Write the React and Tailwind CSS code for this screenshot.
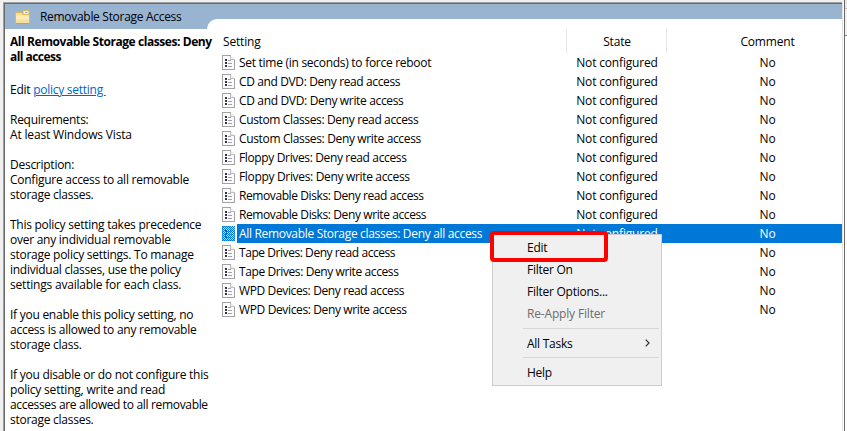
const ROWS = [
  ['Set time (in seconds) to force reboot', 'tracking-[-0.28px]'],
  ['CD and DVD: Deny read access', 'tracking-[-0.38px]'],
  ['CD and DVD: Deny write access', 'tracking-[-0.34px]'],
  ['Custom Classes: Deny read access', 'tracking-[-0.36px]'],
  ['Custom Classes: Deny write access', 'tracking-[-0.35px]'],
  ['Floppy Drives: Deny read access', 'tracking-[-0.36px]'],
  ['Floppy Drives: Deny write access', 'tracking-[-0.33px]'],
  ['Removable Disks: Deny read access', 'tracking-[-0.41px]'],
  ['Removable Disks: Deny write access', 'tracking-[-0.4px]'],
  ['All Removable Storage classes: Deny all access', 'tracking-[-0.32px]'],
  ['Tape Drives: Deny read access', 'tracking-[-0.44px]'],
  ['Tape Drives: Deny write access', 'tracking-[-0.4px]'],
  ['WPD Devices: Deny read access', 'tracking-[-0.38px]'],
  ['WPD Devices: Deny write access', 'tracking-[-0.37px]'],
];

function FolderIcon() {
  return (
    <svg width="16" height="16" viewBox="0 0 16 16" className="shrink-0">
      <path d="M8 1.500h5.500l.5 1V6H8z" fill="#fdf3cf" stroke="#dcb65c" />
      <path d="M.5 3.500h6l1.500 2h6.500v9H.5z" fill="#f8df98" stroke="#dcb65c" />
      <path d="M1 6.500h13v4H1z" fill="#fdebb5" />
      <path d="M10 3.500h2.500" stroke="#8aa9c8" />
      <path d="M1 14.500h13.500" stroke="#cfa146" />
    </svg>
  );
}

function PolicyIcon({ selected }) {
  return (
    <svg width="13" height="15" viewBox="0 0 13 15" className="shrink-0" shapeRendering="crispEdges">
      <path d="M.5.5h8l4 4v10H.5z" fill="#fbfbfb" stroke="#a3a3a3" />
      <path d="M8.500 .5v4h4" fill="#eeeeee" stroke="#c0c0c0" />
      <path d="M3 4h2v2H3zM3 7h2v2H3zM3 10h2v2H3z" fill="#35323f" />
      <path d="M6 5.500h3M6 8.500h4M6 11.500h4" stroke="#a39dba" />
      {selected && (
        <>
          <defs>
            <pattern id="dither" width="2" height="2" patternUnits="userSpaceOnUse">
              <path d="M0 0h1v1H0zM1 1h1v1H1z" fill="#0078d7" />
            </pattern>
          </defs>
          <path d="M0 0h13v15H0z" fill="#0078d7" fillOpacity="0.25" />
          <path d="M0 0h13v15H0z" fill="url(#dither)" />
        </>
      )}
    </svg>
  );
}

function MenuItem({ children, className = '' }) {
  return <div className={`flex h-[22px] items-center pl-[34px] pr-[11px] ${className}`}>{children}</div>;
}

export default function App() {
  return (
    <div className="relative flex h-[431px] w-[847px] overflow-hidden bg-[#f0f0f0] pl-[3px] font-['Open_Sans','Noto_Sans',sans-serif] text-[12px] leading-[15px] tracking-[-0.17px] text-black">
      <div className="mt-[2px] flex w-[839px] shrink-0 flex-col border-l border-t border-[#a0a0a0] bg-white">
        <div className="flex min-h-0 grow flex-col border-l border-t border-[#696969]">
          <div className="flex h-[25px] shrink-0 bg-[#99b4d1]">
            <div className="flex w-[202px] items-center pl-[10px]">
              <FolderIcon />
              <span className="ml-[9px] whitespace-nowrap tracking-[-0.3px]">Removable Storage Access</span>
            </div>
            <div className="mt-[15px] grow rounded-tl-[10px] bg-white" />
          </div>
          <div className="flex min-h-0 grow">
            <div className="w-[215px] shrink-0 whitespace-nowrap pl-[5px] pt-[5px] tracking-[-0.26px]">
              <p className="font-bold tracking-[-0.43px]">All Removable Storage classes: Deny<br /><span className="tracking-[-0.55px]">all access</span></p>
              <p className="mt-[18px]">Edit <a className="whitespace-pre text-[#0066cc] underline">policy setting </a></p>
              <p className="mt-[15px]">Requirements:<br /><span className="tracking-[-0.17px]">At least Windows Vista</span></p>
              <p className="mt-[15px]">Description:<br />Configure access to all removable<br />storage classes.</p>
              <p className="mt-[15px]">This policy setting takes precedence<br />over any individual removable<br />storage policy settings. To manage<br />individual classes, use the policy<br /><span className="tracking-[-0.2px]">settings available for each class.</span></p>
              <p className="mt-[15px]">If you enable this policy setting, no<br />access is allowed to any removable<br />storage class.</p>
              <p className="mt-[15px]">If you disable or do not configure this<br /><span className="tracking-[-0.2px]">policy setting, write and read</span><br /><span className="tracking-[-0.33px]">accesses are allowed to all removable</span><br />storage classes.</p>
            </div>
            <div className="grow">
              <div className="flex h-[24px] items-center">
                <div className="w-[346px] pl-[3px]">Setting</div>
                <div className="h-full w-[101px] border-x border-[#e5e5e5] pl-px pt-[5px] text-center">State</div>
                <div className="w-[175px] pl-[26px] text-center">Comment</div>
              </div>
              {ROWS.map(([name, tracking], i) => {
                const selected = i === 9;
                return (
                  <div key={name} className="flex h-[19px] items-center whitespace-nowrap">
                    <div className="w-[17px] pl-[2px]"><PolicyIcon selected={selected} /></div>
                    <div className={`flex h-full grow items-center ${selected ? 'bg-[#0078d7] text-white' : ''}`}>
                      <div className={`w-[329px] pl-[2px] ${tracking}`}>{name}</div>
                      <div className="w-[101px] pl-px text-center">Not configured</div>
                      <div className="w-[175px] pl-[26px] text-center">No</div>
                    </div>
                  </div>
                );
              })}
            </div>
          </div>
        </div>
      </div>
      <div className="mt-[3px] w-px shrink-0 bg-[#e3e3e3]" />
      <div className="mt-[2px] w-px shrink-0 bg-white" />
      <div className="w-px shrink-0 bg-[#696969]" />
      <div className="w-[2px] shrink-0">
        <div className="h-[8px] bg-[#e8e8e8]" />
        <div className="h-px bg-[#bdbdbd]" />
        <div className="h-[26px] bg-[#f0f0f0]" />
        <div className="h-px bg-[#808080]" />
        <div className="h-[395px] bg-white" />
      </div>
      <div className="absolute left-[492px] top-[234px] h-[152px] w-[170px] border border-[#cccccc] bg-[#f0f0f0] pt-px tracking-[-0.25px]">
        <MenuItem>Edit</MenuItem>
        <MenuItem>Filter On</MenuItem>
        <MenuItem>Filter Options...</MenuItem>
        <MenuItem className="tracking-[-0.17px] text-[#6d6d6d]">Re-Apply Filter</MenuItem>
        <div className="mb-[3px] mt-[4px] ml-[30px] mr-[2px] h-px bg-[#d7d7d7]" />
        <MenuItem className="justify-between">
          All Tasks
          <svg width="5" height="8" viewBox="0 0 5 8"><path d="M.7.7 4 4 .7 7.300" fill="none" stroke="#333" strokeWidth="1.200" /></svg>
        </MenuItem>
        <div className="my-[3px] ml-[30px] mr-[2px] h-px bg-[#d7d7d7]" />
        <MenuItem>Help</MenuItem>
      </div>
      <div className="absolute left-[490px] top-[231px] h-[31px] w-[118px] rounded-[4px] border-4 border-[#ff0000]" />
    </div>
  );
}
